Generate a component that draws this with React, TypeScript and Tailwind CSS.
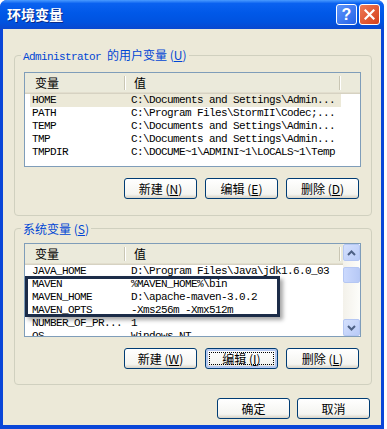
import React from "react";

const cjk = "font-['Noto_Sans_CJK_SC',sans-serif]";
const mono = "font-['Liberation_Mono',monospace] text-[11px] tracking-[-0.6px]";

const userVars: [string, string][] = [
  ["HOME", "C:\\Documents and Settings\\Admin..."],
  ["PATH", "C:\\Program Files\\StormII\\Codec;..."],
  ["TEMP", "C:\\Documents and Settings\\Admin..."],
  ["TMP", "C:\\Documents and Settings\\Admin..."],
  ["TMPDIR", "C:\\DOCUME~1\\ADMINI~1\\LOCALS~1\\Temp"],
];

const systemVars: [string, string][] = [
  ["JAVA_HOME", "D:\\Program Files\\Java\\jdk1.6.0_03"],
  ["MAVEN", "%MAVEN_HOME%\\bin"],
  ["MAVEN_HOME", "D:\\apache-maven-3.0.2"],
  ["MAVEN_OPTS", "-Xms256m -Xmx512m"],
  ["NUMBER_OF_PR...", "1"],
  ["OS", "Windows_NT"],
];

function XPButton({ text, hot, focused }: { text: string; hot?: string; focused?: boolean }) {
  return (
    <button
      className={`relative flex h-[21px] w-[73px] items-center justify-center rounded-[3px] border border-[#003c74] bg-[linear-gradient(to_bottom,#ffffff,#f4f4f0_80%,#d8d3c6)] text-[12px] leading-none text-black ${cjk} ${
        focused ? "shadow-[inset_0_0_0_2px_#b6c9f0]" : ""
      }`}
    >
      <span>
        {text}
        {hot && (
          <>
            {" ("}
            <span className="underline underline-offset-1">{hot}</span>
            {")"}
          </>
        )}
      </span>
      {focused && <span className="absolute inset-[3px] border border-dotted border-black" />}
    </button>
  );
}

function Divider() {
  return <div className="h-[14px] w-[2px] border-l border-r border-l-[#c9c6b4] border-r-white" />;
}

function Header({ tail }: { tail: number }) {
  return (
    <div className="flex h-[21px] shrink-0 items-center border-b border-[#d6d2c2] bg-[#ebeadb] shadow-[inset_0_-1px_0_#e2dece]">
      <div className={`w-[99px] pl-[10px] text-[12px] ${cjk}`}>变量</div>
      <Divider />
      <div className={`pl-[8px] text-[12px] ${cjk}`} style={{ width: 213 }}>
        值
      </div>
      <Divider />
      <div style={{ width: tail }} />
    </div>
  );
}

function Rows({ rows, selected }: { rows: [string, string][]; selected?: number }) {
  return (
    <div className="flex flex-col">
      {rows.map(([k, v], i) => (
        <div
          key={k}
          className={`ml-[5px] flex h-[13px] w-[311px] shrink-0 items-center whitespace-nowrap leading-[13px] text-black ${mono} ${
            i === selected ? "bg-[#ece9d8]" : ""
          }`}
        >
          <div className="w-[96px] pl-[2px]">{k}</div>
          <div className="pl-[5px]">{v}</div>
        </div>
      ))}
    </div>
  );
}

function Chevron({ up }: { up?: boolean }) {
  return (
    <svg width="9" height="6" viewBox="0 0 9 6">
      <polyline
        points={up ? "1,5 4.5,1.5 8,5" : "1,1 4.5,4.5 8,1"}
        fill="none"
        stroke="#4d6185"
        strokeWidth="2"
      />
    </svg>
  );
}

function ScrollBtn({ up }: { up?: boolean }) {
  return (
    <div className="flex h-[17px] w-[17px] shrink-0 items-center justify-center rounded-[2px] border border-[#b5c7f3] bg-[linear-gradient(to_bottom_right,#d4e0fd,#b9cbf7)]">
      <Chevron up={up} />
    </div>
  );
}

function Legend({ ascii, cjkText, hot }: { ascii?: string; cjkText: string; hot: string }) {
  return (
    <legend className="ml-[6px] px-[2px] leading-[14px] text-[#0046d5]">
      {ascii && <span className={mono}>{ascii} </span>}
      <span className={`text-[12px] ${cjk}`}>{cjkText} </span>
      <span className={`text-[12px] ${cjk}`}>
        (<span className="underline underline-offset-1">{hot}</span>)
      </span>
    </legend>
  );
}

export default function App() {
  return (
    <div className="h-[429px] w-[387px] overflow-hidden bg-white">
      <div className="flex h-[429px] w-[384px] flex-col rounded-t-[7px] bg-[#0a46d8]">
        {/* title bar */}
        <div className="flex h-[29px] shrink-0 items-center rounded-t-[7px] bg-[linear-gradient(to_bottom,#4a9bff_0%,#0a62f0_12%,#0058e8_45%,#0053e0_75%,#0a48cf_100%)] pl-[7px] pr-[4px]">
          <div className={`flex-1 text-[14px] font-bold text-white [text-shadow:1px_1px_0_#0a2a8a] ${cjk}`}>
            环境变量
          </div>
          <div className="flex gap-[2px]">
            <div className="flex h-[21px] w-[21px] items-center justify-center rounded-[3px] border border-white bg-[linear-gradient(to_bottom_right,#5d95fb,#2662e8)] font-['Liberation_Sans',sans-serif] text-[16px] font-bold leading-none text-white">
              ?
            </div>
            <div className="flex h-[21px] w-[21px] items-center justify-center rounded-[3px] border border-white bg-[linear-gradient(to_bottom_right,#ee7a55,#d5401c)]">
              <svg width="11" height="11" viewBox="0 0 11 11">
                <path d="M1.5 1.5 L9.5 9.5 M9.5 1.5 L1.5 9.5" stroke="white" strokeWidth="2.2" strokeLinecap="square" />
              </svg>
            </div>
          </div>
        </div>

        {/* client */}
        <div className="mx-[3px] mb-[4px] flex flex-1 flex-col bg-[#ece9d8] pl-[11px] pr-[10px] pt-[18px]">
          <fieldset className="rounded-[4px] border border-[#d0d0bf] p-0">
            <Legend ascii="Administrator" cjkText="的用户变量" hot="U" />
            <div className="pb-[16px] pl-[9px] pr-[10px] pt-[8px]">
              <div className="flex h-[95px] flex-col overflow-hidden border border-[#7f9db9] bg-white">
                <Header tail={19} />
                <Rows rows={userVars} selected={0} />
              </div>
              <div className="mr-[2px] mt-[11px] flex justify-end gap-[8px]">
                <XPButton text="新建" hot="N" />
                <XPButton text="编辑" hot="E" />
                <XPButton text="删除" hot="D" />
              </div>
            </div>
          </fieldset>

          <fieldset className="mt-[5px] rounded-[4px] border border-[#d0d0bf] p-0">
            <Legend cjkText="系统变量" hot="S" />
            <div className="pb-[15px] pl-[9px] pr-[10px] pt-[7px]">
              <div className="relative flex h-[94px] overflow-hidden border border-[#7f9db9] bg-white">
                <div className="flex flex-1 flex-col overflow-hidden">
                  <Header tail={2} />
                  <Rows rows={systemVars} />
                </div>
                <div className="flex w-[17px] flex-col bg-[linear-gradient(to_right,#f3f1ea,#fdfdfa)]">
                  <ScrollBtn up />
                  <div className="mt-[6px] h-[16px] w-[17px] rounded-[2px] border border-[#b5c7f3] bg-[linear-gradient(to_right,#cbd9fd,#b7c9f6)]" />
                  <div className="flex-1" />
                  <ScrollBtn />
                </div>
                <div className="absolute left-0 top-[32px] h-[41px] w-[255px] border-[3px] border-[#1c2c48] shadow-[3px_3px_4px_rgba(0,0,0,0.35)]" />
              </div>
              <div className="mr-[2px] mt-[11px] flex justify-end gap-[8px]">
                <XPButton text="新建" hot="W" />
                <XPButton text="编辑" hot="I" focused />
                <XPButton text="删除" hot="L" />
              </div>
            </div>
          </fieldset>

          <div className="mr-[1px] mt-[13px] flex justify-end gap-[7px]">
            <XPButton text="确定" />
            <XPButton text="取消" />
          </div>
        </div>
      </div>
    </div>
  );
}
